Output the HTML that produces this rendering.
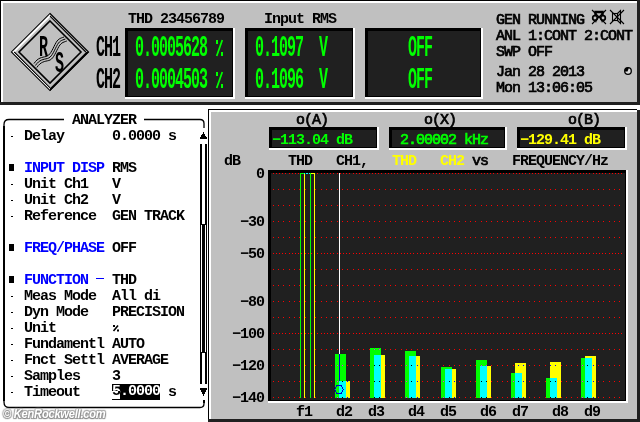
<!DOCTYPE html>
<html><head><meta charset="utf-8"><title>UPL</title>
<style>
html,body{margin:0;padding:0;}
body{width:640px;height:422px;background:#fff;overflow:hidden;position:relative;font-family:"Liberation Mono",monospace;}
#g{position:absolute;left:0;top:0;}
#tx{position:absolute;left:0;top:0;width:640px;height:422px;will-change:transform;}
.t{position:absolute;font:bold 15px/16px "Liberation Mono",monospace;letter-spacing:-1px;white-space:pre;color:#000;height:16px;}
.n{font-weight:normal;-webkit-text-stroke:0.7px currentColor;}
.b{color:#00f;}
.g{color:#0f0;}
.y{color:#ff0;}
.tall{position:absolute;font:bold 15px/16px "Liberation Mono",monospace;letter-spacing:-1px;white-space:pre;height:16px;transform-origin:0 12px;transform:scaleY(2);}
.wm{position:absolute;left:3px;top:407px;font:italic bold 13.5px/14px "Liberation Sans",sans-serif;color:#fff;letter-spacing:-0.3px;transform-origin:0 0;transform:scaleX(0.825);white-space:pre;text-shadow:1px 1px 1px #888,-1px -1px 1px #aaa,1px -1px 1px #aaa,-1px 1px 1px #888,0 0 2px #777;}
</style></head><body>

<svg id="g" width="640" height="422" viewBox="0 0 640 422" shape-rendering="crispEdges">
<rect x="0" y="0" width="640" height="105" fill="#202020"/>
<rect x="0" y="0" width="637" height="1" fill="#000"/>
<rect x="0" y="0" width="1" height="102" fill="#000"/>
<rect x="1" y="1" width="636" height="101" fill="#fff"/>
<rect x="3" y="3" width="634" height="99" fill="#c0c0c0"/>
<rect x="125" y="28" width="110" height="71" fill="#fff"/>
<rect x="125" y="28" width="108" height="69" fill="#000"/>
<rect x="128" y="31" width="104" height="65" fill="#202020"/>
<rect x="245" y="28" width="110" height="71" fill="#fff"/>
<rect x="245" y="28" width="108" height="69" fill="#000"/>
<rect x="248" y="31" width="104" height="65" fill="#202020"/>
<rect x="365" y="28" width="118" height="71" fill="#fff"/>
<rect x="365" y="28" width="116" height="69" fill="#000"/>
<rect x="368" y="31" width="112" height="65" fill="#202020"/>
<rect x="208" y="109" width="432" height="313" fill="#202020"/>
<rect x="208" y="109" width="429" height="310" fill="#000"/>
<rect x="209" y="110" width="428" height="309" fill="#fff"/>
<rect x="211" y="112" width="426" height="307" fill="#c0c0c0"/>
<rect x="637" y="105" width="3" height="5" fill="#fff"/>
<rect x="269" y="127" width="110" height="23" fill="#fff"/>
<rect x="269" y="127" width="108" height="21" fill="#000"/>
<rect x="272" y="130" width="104" height="17" fill="#202020"/>
<rect x="389" y="127" width="118" height="23" fill="#fff"/>
<rect x="389" y="127" width="116" height="21" fill="#000"/>
<rect x="392" y="130" width="112" height="17" fill="#202020"/>
<rect x="517" y="127" width="110" height="23" fill="#fff"/>
<rect x="517" y="127" width="108" height="21" fill="#000"/>
<rect x="520" y="130" width="104" height="17" fill="#202020"/>
<rect x="268" y="170" width="360" height="233" fill="#fff"/>
<rect x="268" y="170" width="358" height="231" fill="#000"/>
<rect x="271" y="173" width="354" height="227" fill="#202020"/>
<rect x="273" y="173" width="1" height="1" fill="#f00"/>
<rect x="276" y="173" width="1" height="1" fill="#f00"/>
<rect x="279" y="173" width="1" height="1" fill="#f00"/>
<rect x="282" y="173" width="1" height="1" fill="#f00"/>
<rect x="285" y="173" width="1" height="1" fill="#f00"/>
<rect x="289" y="173" width="1" height="1" fill="#f00"/>
<rect x="292" y="173" width="1" height="1" fill="#f00"/>
<rect x="295" y="173" width="1" height="1" fill="#f00"/>
<rect x="298" y="173" width="1" height="1" fill="#f00"/>
<rect x="317" y="173" width="1" height="1" fill="#f00"/>
<rect x="321" y="173" width="1" height="1" fill="#f00"/>
<rect x="324" y="173" width="1" height="1" fill="#f00"/>
<rect x="327" y="173" width="1" height="1" fill="#f00"/>
<rect x="330" y="173" width="1" height="1" fill="#f00"/>
<rect x="333" y="173" width="1" height="1" fill="#f00"/>
<rect x="337" y="173" width="1" height="1" fill="#f00"/>
<rect x="340" y="173" width="1" height="1" fill="#f00"/>
<rect x="343" y="173" width="1" height="1" fill="#f00"/>
<rect x="346" y="173" width="1" height="1" fill="#f00"/>
<rect x="349" y="173" width="1" height="1" fill="#f00"/>
<rect x="353" y="173" width="1" height="1" fill="#f00"/>
<rect x="356" y="173" width="1" height="1" fill="#f00"/>
<rect x="359" y="173" width="1" height="1" fill="#f00"/>
<rect x="362" y="173" width="1" height="1" fill="#f00"/>
<rect x="365" y="173" width="1" height="1" fill="#f00"/>
<rect x="369" y="173" width="1" height="1" fill="#f00"/>
<rect x="372" y="173" width="1" height="1" fill="#f00"/>
<rect x="375" y="173" width="1" height="1" fill="#f00"/>
<rect x="378" y="173" width="1" height="1" fill="#f00"/>
<rect x="381" y="173" width="1" height="1" fill="#f00"/>
<rect x="385" y="173" width="1" height="1" fill="#f00"/>
<rect x="388" y="173" width="1" height="1" fill="#f00"/>
<rect x="391" y="173" width="1" height="1" fill="#f00"/>
<rect x="394" y="173" width="1" height="1" fill="#f00"/>
<rect x="397" y="173" width="1" height="1" fill="#f00"/>
<rect x="401" y="173" width="1" height="1" fill="#f00"/>
<rect x="404" y="173" width="1" height="1" fill="#f00"/>
<rect x="407" y="173" width="1" height="1" fill="#f00"/>
<rect x="410" y="173" width="1" height="1" fill="#f00"/>
<rect x="413" y="173" width="1" height="1" fill="#f00"/>
<rect x="417" y="173" width="1" height="1" fill="#f00"/>
<rect x="420" y="173" width="1" height="1" fill="#f00"/>
<rect x="423" y="173" width="1" height="1" fill="#f00"/>
<rect x="426" y="173" width="1" height="1" fill="#f00"/>
<rect x="429" y="173" width="1" height="1" fill="#f00"/>
<rect x="433" y="173" width="1" height="1" fill="#f00"/>
<rect x="436" y="173" width="1" height="1" fill="#f00"/>
<rect x="439" y="173" width="1" height="1" fill="#f00"/>
<rect x="442" y="173" width="1" height="1" fill="#f00"/>
<rect x="445" y="173" width="1" height="1" fill="#f00"/>
<rect x="449" y="173" width="1" height="1" fill="#f00"/>
<rect x="452" y="173" width="1" height="1" fill="#f00"/>
<rect x="455" y="173" width="1" height="1" fill="#f00"/>
<rect x="458" y="173" width="1" height="1" fill="#f00"/>
<rect x="461" y="173" width="1" height="1" fill="#f00"/>
<rect x="465" y="173" width="1" height="1" fill="#f00"/>
<rect x="468" y="173" width="1" height="1" fill="#f00"/>
<rect x="471" y="173" width="1" height="1" fill="#f00"/>
<rect x="474" y="173" width="1" height="1" fill="#f00"/>
<rect x="477" y="173" width="1" height="1" fill="#f00"/>
<rect x="481" y="173" width="1" height="1" fill="#f00"/>
<rect x="484" y="173" width="1" height="1" fill="#f00"/>
<rect x="487" y="173" width="1" height="1" fill="#f00"/>
<rect x="490" y="173" width="1" height="1" fill="#f00"/>
<rect x="493" y="173" width="1" height="1" fill="#f00"/>
<rect x="497" y="173" width="1" height="1" fill="#f00"/>
<rect x="500" y="173" width="1" height="1" fill="#f00"/>
<rect x="503" y="173" width="1" height="1" fill="#f00"/>
<rect x="506" y="173" width="1" height="1" fill="#f00"/>
<rect x="509" y="173" width="1" height="1" fill="#f00"/>
<rect x="513" y="173" width="1" height="1" fill="#f00"/>
<rect x="516" y="173" width="1" height="1" fill="#f00"/>
<rect x="519" y="173" width="1" height="1" fill="#f00"/>
<rect x="522" y="173" width="1" height="1" fill="#f00"/>
<rect x="525" y="173" width="1" height="1" fill="#f00"/>
<rect x="529" y="173" width="1" height="1" fill="#f00"/>
<rect x="532" y="173" width="1" height="1" fill="#f00"/>
<rect x="535" y="173" width="1" height="1" fill="#f00"/>
<rect x="538" y="173" width="1" height="1" fill="#f00"/>
<rect x="541" y="173" width="1" height="1" fill="#f00"/>
<rect x="545" y="173" width="1" height="1" fill="#f00"/>
<rect x="548" y="173" width="1" height="1" fill="#f00"/>
<rect x="551" y="173" width="1" height="1" fill="#f00"/>
<rect x="554" y="173" width="1" height="1" fill="#f00"/>
<rect x="557" y="173" width="1" height="1" fill="#f00"/>
<rect x="561" y="173" width="1" height="1" fill="#f00"/>
<rect x="564" y="173" width="1" height="1" fill="#f00"/>
<rect x="567" y="173" width="1" height="1" fill="#f00"/>
<rect x="570" y="173" width="1" height="1" fill="#f00"/>
<rect x="573" y="173" width="1" height="1" fill="#f00"/>
<rect x="577" y="173" width="1" height="1" fill="#f00"/>
<rect x="580" y="173" width="1" height="1" fill="#f00"/>
<rect x="583" y="173" width="1" height="1" fill="#f00"/>
<rect x="586" y="173" width="1" height="1" fill="#f00"/>
<rect x="589" y="173" width="1" height="1" fill="#f00"/>
<rect x="593" y="173" width="1" height="1" fill="#f00"/>
<rect x="596" y="173" width="1" height="1" fill="#f00"/>
<rect x="599" y="173" width="1" height="1" fill="#f00"/>
<rect x="602" y="173" width="1" height="1" fill="#f00"/>
<rect x="605" y="173" width="1" height="1" fill="#f00"/>
<rect x="609" y="173" width="1" height="1" fill="#f00"/>
<rect x="612" y="173" width="1" height="1" fill="#f00"/>
<rect x="615" y="173" width="1" height="1" fill="#f00"/>
<rect x="618" y="173" width="1" height="1" fill="#f00"/>
<rect x="621" y="173" width="1" height="1" fill="#f00"/>
<rect x="273" y="189" width="1" height="1" fill="#f00"/>
<rect x="278" y="189" width="1" height="1" fill="#f00"/>
<rect x="283" y="189" width="1" height="1" fill="#f00"/>
<rect x="289" y="189" width="1" height="1" fill="#f00"/>
<rect x="294" y="189" width="1" height="1" fill="#f00"/>
<rect x="299" y="189" width="1" height="1" fill="#f00"/>
<rect x="305" y="189" width="1" height="1" fill="#f00"/>
<rect x="310" y="189" width="1" height="1" fill="#f00"/>
<rect x="315" y="189" width="1" height="1" fill="#f00"/>
<rect x="321" y="189" width="1" height="1" fill="#f00"/>
<rect x="326" y="189" width="1" height="1" fill="#f00"/>
<rect x="331" y="189" width="1" height="1" fill="#f00"/>
<rect x="337" y="189" width="1" height="1" fill="#f00"/>
<rect x="342" y="189" width="1" height="1" fill="#f00"/>
<rect x="347" y="189" width="1" height="1" fill="#f00"/>
<rect x="353" y="189" width="1" height="1" fill="#f00"/>
<rect x="358" y="189" width="1" height="1" fill="#f00"/>
<rect x="363" y="189" width="1" height="1" fill="#f00"/>
<rect x="369" y="189" width="1" height="1" fill="#f00"/>
<rect x="374" y="189" width="1" height="1" fill="#f00"/>
<rect x="379" y="189" width="1" height="1" fill="#f00"/>
<rect x="385" y="189" width="1" height="1" fill="#f00"/>
<rect x="390" y="189" width="1" height="1" fill="#f00"/>
<rect x="395" y="189" width="1" height="1" fill="#f00"/>
<rect x="401" y="189" width="1" height="1" fill="#f00"/>
<rect x="406" y="189" width="1" height="1" fill="#f00"/>
<rect x="411" y="189" width="1" height="1" fill="#f00"/>
<rect x="417" y="189" width="1" height="1" fill="#f00"/>
<rect x="422" y="189" width="1" height="1" fill="#f00"/>
<rect x="427" y="189" width="1" height="1" fill="#f00"/>
<rect x="433" y="189" width="1" height="1" fill="#f00"/>
<rect x="438" y="189" width="1" height="1" fill="#f00"/>
<rect x="443" y="189" width="1" height="1" fill="#f00"/>
<rect x="449" y="189" width="1" height="1" fill="#f00"/>
<rect x="454" y="189" width="1" height="1" fill="#f00"/>
<rect x="459" y="189" width="1" height="1" fill="#f00"/>
<rect x="465" y="189" width="1" height="1" fill="#f00"/>
<rect x="470" y="189" width="1" height="1" fill="#f00"/>
<rect x="475" y="189" width="1" height="1" fill="#f00"/>
<rect x="481" y="189" width="1" height="1" fill="#f00"/>
<rect x="486" y="189" width="1" height="1" fill="#f00"/>
<rect x="491" y="189" width="1" height="1" fill="#f00"/>
<rect x="497" y="189" width="1" height="1" fill="#f00"/>
<rect x="502" y="189" width="1" height="1" fill="#f00"/>
<rect x="507" y="189" width="1" height="1" fill="#f00"/>
<rect x="513" y="189" width="1" height="1" fill="#f00"/>
<rect x="518" y="189" width="1" height="1" fill="#f00"/>
<rect x="523" y="189" width="1" height="1" fill="#f00"/>
<rect x="529" y="189" width="1" height="1" fill="#f00"/>
<rect x="534" y="189" width="1" height="1" fill="#f00"/>
<rect x="539" y="189" width="1" height="1" fill="#f00"/>
<rect x="545" y="189" width="1" height="1" fill="#f00"/>
<rect x="550" y="189" width="1" height="1" fill="#f00"/>
<rect x="555" y="189" width="1" height="1" fill="#f00"/>
<rect x="561" y="189" width="1" height="1" fill="#f00"/>
<rect x="566" y="189" width="1" height="1" fill="#f00"/>
<rect x="571" y="189" width="1" height="1" fill="#f00"/>
<rect x="577" y="189" width="1" height="1" fill="#f00"/>
<rect x="582" y="189" width="1" height="1" fill="#f00"/>
<rect x="587" y="189" width="1" height="1" fill="#f00"/>
<rect x="593" y="189" width="1" height="1" fill="#f00"/>
<rect x="598" y="189" width="1" height="1" fill="#f00"/>
<rect x="603" y="189" width="1" height="1" fill="#f00"/>
<rect x="609" y="189" width="1" height="1" fill="#f00"/>
<rect x="614" y="189" width="1" height="1" fill="#f00"/>
<rect x="619" y="189" width="1" height="1" fill="#f00"/>
<rect x="273" y="205" width="1" height="1" fill="#f00"/>
<rect x="278" y="205" width="1" height="1" fill="#f00"/>
<rect x="283" y="205" width="1" height="1" fill="#f00"/>
<rect x="289" y="205" width="1" height="1" fill="#f00"/>
<rect x="294" y="205" width="1" height="1" fill="#f00"/>
<rect x="299" y="205" width="1" height="1" fill="#f00"/>
<rect x="305" y="205" width="1" height="1" fill="#f00"/>
<rect x="310" y="205" width="1" height="1" fill="#f00"/>
<rect x="315" y="205" width="1" height="1" fill="#f00"/>
<rect x="321" y="205" width="1" height="1" fill="#f00"/>
<rect x="326" y="205" width="1" height="1" fill="#f00"/>
<rect x="331" y="205" width="1" height="1" fill="#f00"/>
<rect x="337" y="205" width="1" height="1" fill="#f00"/>
<rect x="342" y="205" width="1" height="1" fill="#f00"/>
<rect x="347" y="205" width="1" height="1" fill="#f00"/>
<rect x="353" y="205" width="1" height="1" fill="#f00"/>
<rect x="358" y="205" width="1" height="1" fill="#f00"/>
<rect x="363" y="205" width="1" height="1" fill="#f00"/>
<rect x="369" y="205" width="1" height="1" fill="#f00"/>
<rect x="374" y="205" width="1" height="1" fill="#f00"/>
<rect x="379" y="205" width="1" height="1" fill="#f00"/>
<rect x="385" y="205" width="1" height="1" fill="#f00"/>
<rect x="390" y="205" width="1" height="1" fill="#f00"/>
<rect x="395" y="205" width="1" height="1" fill="#f00"/>
<rect x="401" y="205" width="1" height="1" fill="#f00"/>
<rect x="406" y="205" width="1" height="1" fill="#f00"/>
<rect x="411" y="205" width="1" height="1" fill="#f00"/>
<rect x="417" y="205" width="1" height="1" fill="#f00"/>
<rect x="422" y="205" width="1" height="1" fill="#f00"/>
<rect x="427" y="205" width="1" height="1" fill="#f00"/>
<rect x="433" y="205" width="1" height="1" fill="#f00"/>
<rect x="438" y="205" width="1" height="1" fill="#f00"/>
<rect x="443" y="205" width="1" height="1" fill="#f00"/>
<rect x="449" y="205" width="1" height="1" fill="#f00"/>
<rect x="454" y="205" width="1" height="1" fill="#f00"/>
<rect x="459" y="205" width="1" height="1" fill="#f00"/>
<rect x="465" y="205" width="1" height="1" fill="#f00"/>
<rect x="470" y="205" width="1" height="1" fill="#f00"/>
<rect x="475" y="205" width="1" height="1" fill="#f00"/>
<rect x="481" y="205" width="1" height="1" fill="#f00"/>
<rect x="486" y="205" width="1" height="1" fill="#f00"/>
<rect x="491" y="205" width="1" height="1" fill="#f00"/>
<rect x="497" y="205" width="1" height="1" fill="#f00"/>
<rect x="502" y="205" width="1" height="1" fill="#f00"/>
<rect x="507" y="205" width="1" height="1" fill="#f00"/>
<rect x="513" y="205" width="1" height="1" fill="#f00"/>
<rect x="518" y="205" width="1" height="1" fill="#f00"/>
<rect x="523" y="205" width="1" height="1" fill="#f00"/>
<rect x="529" y="205" width="1" height="1" fill="#f00"/>
<rect x="534" y="205" width="1" height="1" fill="#f00"/>
<rect x="539" y="205" width="1" height="1" fill="#f00"/>
<rect x="545" y="205" width="1" height="1" fill="#f00"/>
<rect x="550" y="205" width="1" height="1" fill="#f00"/>
<rect x="555" y="205" width="1" height="1" fill="#f00"/>
<rect x="561" y="205" width="1" height="1" fill="#f00"/>
<rect x="566" y="205" width="1" height="1" fill="#f00"/>
<rect x="571" y="205" width="1" height="1" fill="#f00"/>
<rect x="577" y="205" width="1" height="1" fill="#f00"/>
<rect x="582" y="205" width="1" height="1" fill="#f00"/>
<rect x="587" y="205" width="1" height="1" fill="#f00"/>
<rect x="593" y="205" width="1" height="1" fill="#f00"/>
<rect x="598" y="205" width="1" height="1" fill="#f00"/>
<rect x="603" y="205" width="1" height="1" fill="#f00"/>
<rect x="609" y="205" width="1" height="1" fill="#f00"/>
<rect x="614" y="205" width="1" height="1" fill="#f00"/>
<rect x="619" y="205" width="1" height="1" fill="#f00"/>
<rect x="273" y="221" width="1" height="1" fill="#f00"/>
<rect x="278" y="221" width="1" height="1" fill="#f00"/>
<rect x="283" y="221" width="1" height="1" fill="#f00"/>
<rect x="289" y="221" width="1" height="1" fill="#f00"/>
<rect x="294" y="221" width="1" height="1" fill="#f00"/>
<rect x="299" y="221" width="1" height="1" fill="#f00"/>
<rect x="305" y="221" width="1" height="1" fill="#f00"/>
<rect x="310" y="221" width="1" height="1" fill="#f00"/>
<rect x="315" y="221" width="1" height="1" fill="#f00"/>
<rect x="321" y="221" width="1" height="1" fill="#f00"/>
<rect x="326" y="221" width="1" height="1" fill="#f00"/>
<rect x="331" y="221" width="1" height="1" fill="#f00"/>
<rect x="337" y="221" width="1" height="1" fill="#f00"/>
<rect x="342" y="221" width="1" height="1" fill="#f00"/>
<rect x="347" y="221" width="1" height="1" fill="#f00"/>
<rect x="353" y="221" width="1" height="1" fill="#f00"/>
<rect x="358" y="221" width="1" height="1" fill="#f00"/>
<rect x="363" y="221" width="1" height="1" fill="#f00"/>
<rect x="369" y="221" width="1" height="1" fill="#f00"/>
<rect x="374" y="221" width="1" height="1" fill="#f00"/>
<rect x="379" y="221" width="1" height="1" fill="#f00"/>
<rect x="385" y="221" width="1" height="1" fill="#f00"/>
<rect x="390" y="221" width="1" height="1" fill="#f00"/>
<rect x="395" y="221" width="1" height="1" fill="#f00"/>
<rect x="401" y="221" width="1" height="1" fill="#f00"/>
<rect x="406" y="221" width="1" height="1" fill="#f00"/>
<rect x="411" y="221" width="1" height="1" fill="#f00"/>
<rect x="417" y="221" width="1" height="1" fill="#f00"/>
<rect x="422" y="221" width="1" height="1" fill="#f00"/>
<rect x="427" y="221" width="1" height="1" fill="#f00"/>
<rect x="433" y="221" width="1" height="1" fill="#f00"/>
<rect x="438" y="221" width="1" height="1" fill="#f00"/>
<rect x="443" y="221" width="1" height="1" fill="#f00"/>
<rect x="449" y="221" width="1" height="1" fill="#f00"/>
<rect x="454" y="221" width="1" height="1" fill="#f00"/>
<rect x="459" y="221" width="1" height="1" fill="#f00"/>
<rect x="465" y="221" width="1" height="1" fill="#f00"/>
<rect x="470" y="221" width="1" height="1" fill="#f00"/>
<rect x="475" y="221" width="1" height="1" fill="#f00"/>
<rect x="481" y="221" width="1" height="1" fill="#f00"/>
<rect x="486" y="221" width="1" height="1" fill="#f00"/>
<rect x="491" y="221" width="1" height="1" fill="#f00"/>
<rect x="497" y="221" width="1" height="1" fill="#f00"/>
<rect x="502" y="221" width="1" height="1" fill="#f00"/>
<rect x="507" y="221" width="1" height="1" fill="#f00"/>
<rect x="513" y="221" width="1" height="1" fill="#f00"/>
<rect x="518" y="221" width="1" height="1" fill="#f00"/>
<rect x="523" y="221" width="1" height="1" fill="#f00"/>
<rect x="529" y="221" width="1" height="1" fill="#f00"/>
<rect x="534" y="221" width="1" height="1" fill="#f00"/>
<rect x="539" y="221" width="1" height="1" fill="#f00"/>
<rect x="545" y="221" width="1" height="1" fill="#f00"/>
<rect x="550" y="221" width="1" height="1" fill="#f00"/>
<rect x="555" y="221" width="1" height="1" fill="#f00"/>
<rect x="561" y="221" width="1" height="1" fill="#f00"/>
<rect x="566" y="221" width="1" height="1" fill="#f00"/>
<rect x="571" y="221" width="1" height="1" fill="#f00"/>
<rect x="577" y="221" width="1" height="1" fill="#f00"/>
<rect x="582" y="221" width="1" height="1" fill="#f00"/>
<rect x="587" y="221" width="1" height="1" fill="#f00"/>
<rect x="593" y="221" width="1" height="1" fill="#f00"/>
<rect x="598" y="221" width="1" height="1" fill="#f00"/>
<rect x="603" y="221" width="1" height="1" fill="#f00"/>
<rect x="609" y="221" width="1" height="1" fill="#f00"/>
<rect x="614" y="221" width="1" height="1" fill="#f00"/>
<rect x="619" y="221" width="1" height="1" fill="#f00"/>
<rect x="273" y="237" width="1" height="1" fill="#f00"/>
<rect x="278" y="237" width="1" height="1" fill="#f00"/>
<rect x="283" y="237" width="1" height="1" fill="#f00"/>
<rect x="289" y="237" width="1" height="1" fill="#f00"/>
<rect x="294" y="237" width="1" height="1" fill="#f00"/>
<rect x="299" y="237" width="1" height="1" fill="#f00"/>
<rect x="305" y="237" width="1" height="1" fill="#f00"/>
<rect x="310" y="237" width="1" height="1" fill="#f00"/>
<rect x="315" y="237" width="1" height="1" fill="#f00"/>
<rect x="321" y="237" width="1" height="1" fill="#f00"/>
<rect x="326" y="237" width="1" height="1" fill="#f00"/>
<rect x="331" y="237" width="1" height="1" fill="#f00"/>
<rect x="337" y="237" width="1" height="1" fill="#f00"/>
<rect x="342" y="237" width="1" height="1" fill="#f00"/>
<rect x="347" y="237" width="1" height="1" fill="#f00"/>
<rect x="353" y="237" width="1" height="1" fill="#f00"/>
<rect x="358" y="237" width="1" height="1" fill="#f00"/>
<rect x="363" y="237" width="1" height="1" fill="#f00"/>
<rect x="369" y="237" width="1" height="1" fill="#f00"/>
<rect x="374" y="237" width="1" height="1" fill="#f00"/>
<rect x="379" y="237" width="1" height="1" fill="#f00"/>
<rect x="385" y="237" width="1" height="1" fill="#f00"/>
<rect x="390" y="237" width="1" height="1" fill="#f00"/>
<rect x="395" y="237" width="1" height="1" fill="#f00"/>
<rect x="401" y="237" width="1" height="1" fill="#f00"/>
<rect x="406" y="237" width="1" height="1" fill="#f00"/>
<rect x="411" y="237" width="1" height="1" fill="#f00"/>
<rect x="417" y="237" width="1" height="1" fill="#f00"/>
<rect x="422" y="237" width="1" height="1" fill="#f00"/>
<rect x="427" y="237" width="1" height="1" fill="#f00"/>
<rect x="433" y="237" width="1" height="1" fill="#f00"/>
<rect x="438" y="237" width="1" height="1" fill="#f00"/>
<rect x="443" y="237" width="1" height="1" fill="#f00"/>
<rect x="449" y="237" width="1" height="1" fill="#f00"/>
<rect x="454" y="237" width="1" height="1" fill="#f00"/>
<rect x="459" y="237" width="1" height="1" fill="#f00"/>
<rect x="465" y="237" width="1" height="1" fill="#f00"/>
<rect x="470" y="237" width="1" height="1" fill="#f00"/>
<rect x="475" y="237" width="1" height="1" fill="#f00"/>
<rect x="481" y="237" width="1" height="1" fill="#f00"/>
<rect x="486" y="237" width="1" height="1" fill="#f00"/>
<rect x="491" y="237" width="1" height="1" fill="#f00"/>
<rect x="497" y="237" width="1" height="1" fill="#f00"/>
<rect x="502" y="237" width="1" height="1" fill="#f00"/>
<rect x="507" y="237" width="1" height="1" fill="#f00"/>
<rect x="513" y="237" width="1" height="1" fill="#f00"/>
<rect x="518" y="237" width="1" height="1" fill="#f00"/>
<rect x="523" y="237" width="1" height="1" fill="#f00"/>
<rect x="529" y="237" width="1" height="1" fill="#f00"/>
<rect x="534" y="237" width="1" height="1" fill="#f00"/>
<rect x="539" y="237" width="1" height="1" fill="#f00"/>
<rect x="545" y="237" width="1" height="1" fill="#f00"/>
<rect x="550" y="237" width="1" height="1" fill="#f00"/>
<rect x="555" y="237" width="1" height="1" fill="#f00"/>
<rect x="561" y="237" width="1" height="1" fill="#f00"/>
<rect x="566" y="237" width="1" height="1" fill="#f00"/>
<rect x="571" y="237" width="1" height="1" fill="#f00"/>
<rect x="577" y="237" width="1" height="1" fill="#f00"/>
<rect x="582" y="237" width="1" height="1" fill="#f00"/>
<rect x="587" y="237" width="1" height="1" fill="#f00"/>
<rect x="593" y="237" width="1" height="1" fill="#f00"/>
<rect x="598" y="237" width="1" height="1" fill="#f00"/>
<rect x="603" y="237" width="1" height="1" fill="#f00"/>
<rect x="609" y="237" width="1" height="1" fill="#f00"/>
<rect x="614" y="237" width="1" height="1" fill="#f00"/>
<rect x="619" y="237" width="1" height="1" fill="#f00"/>
<rect x="273" y="253" width="1" height="1" fill="#f00"/>
<rect x="276" y="253" width="1" height="1" fill="#f00"/>
<rect x="279" y="253" width="1" height="1" fill="#f00"/>
<rect x="282" y="253" width="1" height="1" fill="#f00"/>
<rect x="285" y="253" width="1" height="1" fill="#f00"/>
<rect x="289" y="253" width="1" height="1" fill="#f00"/>
<rect x="292" y="253" width="1" height="1" fill="#f00"/>
<rect x="295" y="253" width="1" height="1" fill="#f00"/>
<rect x="298" y="253" width="1" height="1" fill="#f00"/>
<rect x="301" y="253" width="1" height="1" fill="#f00"/>
<rect x="305" y="253" width="1" height="1" fill="#f00"/>
<rect x="308" y="253" width="1" height="1" fill="#f00"/>
<rect x="311" y="253" width="1" height="1" fill="#f00"/>
<rect x="314" y="253" width="1" height="1" fill="#f00"/>
<rect x="317" y="253" width="1" height="1" fill="#f00"/>
<rect x="321" y="253" width="1" height="1" fill="#f00"/>
<rect x="324" y="253" width="1" height="1" fill="#f00"/>
<rect x="327" y="253" width="1" height="1" fill="#f00"/>
<rect x="330" y="253" width="1" height="1" fill="#f00"/>
<rect x="333" y="253" width="1" height="1" fill="#f00"/>
<rect x="337" y="253" width="1" height="1" fill="#f00"/>
<rect x="340" y="253" width="1" height="1" fill="#f00"/>
<rect x="343" y="253" width="1" height="1" fill="#f00"/>
<rect x="346" y="253" width="1" height="1" fill="#f00"/>
<rect x="349" y="253" width="1" height="1" fill="#f00"/>
<rect x="353" y="253" width="1" height="1" fill="#f00"/>
<rect x="356" y="253" width="1" height="1" fill="#f00"/>
<rect x="359" y="253" width="1" height="1" fill="#f00"/>
<rect x="362" y="253" width="1" height="1" fill="#f00"/>
<rect x="365" y="253" width="1" height="1" fill="#f00"/>
<rect x="369" y="253" width="1" height="1" fill="#f00"/>
<rect x="372" y="253" width="1" height="1" fill="#f00"/>
<rect x="375" y="253" width="1" height="1" fill="#f00"/>
<rect x="378" y="253" width="1" height="1" fill="#f00"/>
<rect x="381" y="253" width="1" height="1" fill="#f00"/>
<rect x="385" y="253" width="1" height="1" fill="#f00"/>
<rect x="388" y="253" width="1" height="1" fill="#f00"/>
<rect x="391" y="253" width="1" height="1" fill="#f00"/>
<rect x="394" y="253" width="1" height="1" fill="#f00"/>
<rect x="397" y="253" width="1" height="1" fill="#f00"/>
<rect x="401" y="253" width="1" height="1" fill="#f00"/>
<rect x="404" y="253" width="1" height="1" fill="#f00"/>
<rect x="407" y="253" width="1" height="1" fill="#f00"/>
<rect x="410" y="253" width="1" height="1" fill="#f00"/>
<rect x="413" y="253" width="1" height="1" fill="#f00"/>
<rect x="417" y="253" width="1" height="1" fill="#f00"/>
<rect x="420" y="253" width="1" height="1" fill="#f00"/>
<rect x="423" y="253" width="1" height="1" fill="#f00"/>
<rect x="426" y="253" width="1" height="1" fill="#f00"/>
<rect x="429" y="253" width="1" height="1" fill="#f00"/>
<rect x="433" y="253" width="1" height="1" fill="#f00"/>
<rect x="436" y="253" width="1" height="1" fill="#f00"/>
<rect x="439" y="253" width="1" height="1" fill="#f00"/>
<rect x="442" y="253" width="1" height="1" fill="#f00"/>
<rect x="445" y="253" width="1" height="1" fill="#f00"/>
<rect x="449" y="253" width="1" height="1" fill="#f00"/>
<rect x="452" y="253" width="1" height="1" fill="#f00"/>
<rect x="455" y="253" width="1" height="1" fill="#f00"/>
<rect x="458" y="253" width="1" height="1" fill="#f00"/>
<rect x="461" y="253" width="1" height="1" fill="#f00"/>
<rect x="465" y="253" width="1" height="1" fill="#f00"/>
<rect x="468" y="253" width="1" height="1" fill="#f00"/>
<rect x="471" y="253" width="1" height="1" fill="#f00"/>
<rect x="474" y="253" width="1" height="1" fill="#f00"/>
<rect x="477" y="253" width="1" height="1" fill="#f00"/>
<rect x="481" y="253" width="1" height="1" fill="#f00"/>
<rect x="484" y="253" width="1" height="1" fill="#f00"/>
<rect x="487" y="253" width="1" height="1" fill="#f00"/>
<rect x="490" y="253" width="1" height="1" fill="#f00"/>
<rect x="493" y="253" width="1" height="1" fill="#f00"/>
<rect x="497" y="253" width="1" height="1" fill="#f00"/>
<rect x="500" y="253" width="1" height="1" fill="#f00"/>
<rect x="503" y="253" width="1" height="1" fill="#f00"/>
<rect x="506" y="253" width="1" height="1" fill="#f00"/>
<rect x="509" y="253" width="1" height="1" fill="#f00"/>
<rect x="513" y="253" width="1" height="1" fill="#f00"/>
<rect x="516" y="253" width="1" height="1" fill="#f00"/>
<rect x="519" y="253" width="1" height="1" fill="#f00"/>
<rect x="522" y="253" width="1" height="1" fill="#f00"/>
<rect x="525" y="253" width="1" height="1" fill="#f00"/>
<rect x="529" y="253" width="1" height="1" fill="#f00"/>
<rect x="532" y="253" width="1" height="1" fill="#f00"/>
<rect x="535" y="253" width="1" height="1" fill="#f00"/>
<rect x="538" y="253" width="1" height="1" fill="#f00"/>
<rect x="541" y="253" width="1" height="1" fill="#f00"/>
<rect x="545" y="253" width="1" height="1" fill="#f00"/>
<rect x="548" y="253" width="1" height="1" fill="#f00"/>
<rect x="551" y="253" width="1" height="1" fill="#f00"/>
<rect x="554" y="253" width="1" height="1" fill="#f00"/>
<rect x="557" y="253" width="1" height="1" fill="#f00"/>
<rect x="561" y="253" width="1" height="1" fill="#f00"/>
<rect x="564" y="253" width="1" height="1" fill="#f00"/>
<rect x="567" y="253" width="1" height="1" fill="#f00"/>
<rect x="570" y="253" width="1" height="1" fill="#f00"/>
<rect x="573" y="253" width="1" height="1" fill="#f00"/>
<rect x="577" y="253" width="1" height="1" fill="#f00"/>
<rect x="580" y="253" width="1" height="1" fill="#f00"/>
<rect x="583" y="253" width="1" height="1" fill="#f00"/>
<rect x="586" y="253" width="1" height="1" fill="#f00"/>
<rect x="589" y="253" width="1" height="1" fill="#f00"/>
<rect x="593" y="253" width="1" height="1" fill="#f00"/>
<rect x="596" y="253" width="1" height="1" fill="#f00"/>
<rect x="599" y="253" width="1" height="1" fill="#f00"/>
<rect x="602" y="253" width="1" height="1" fill="#f00"/>
<rect x="605" y="253" width="1" height="1" fill="#f00"/>
<rect x="609" y="253" width="1" height="1" fill="#f00"/>
<rect x="612" y="253" width="1" height="1" fill="#f00"/>
<rect x="615" y="253" width="1" height="1" fill="#f00"/>
<rect x="618" y="253" width="1" height="1" fill="#f00"/>
<rect x="621" y="253" width="1" height="1" fill="#f00"/>
<rect x="273" y="269" width="1" height="1" fill="#f00"/>
<rect x="278" y="269" width="1" height="1" fill="#f00"/>
<rect x="283" y="269" width="1" height="1" fill="#f00"/>
<rect x="289" y="269" width="1" height="1" fill="#f00"/>
<rect x="294" y="269" width="1" height="1" fill="#f00"/>
<rect x="299" y="269" width="1" height="1" fill="#f00"/>
<rect x="305" y="269" width="1" height="1" fill="#f00"/>
<rect x="310" y="269" width="1" height="1" fill="#f00"/>
<rect x="315" y="269" width="1" height="1" fill="#f00"/>
<rect x="321" y="269" width="1" height="1" fill="#f00"/>
<rect x="326" y="269" width="1" height="1" fill="#f00"/>
<rect x="331" y="269" width="1" height="1" fill="#f00"/>
<rect x="337" y="269" width="1" height="1" fill="#f00"/>
<rect x="342" y="269" width="1" height="1" fill="#f00"/>
<rect x="347" y="269" width="1" height="1" fill="#f00"/>
<rect x="353" y="269" width="1" height="1" fill="#f00"/>
<rect x="358" y="269" width="1" height="1" fill="#f00"/>
<rect x="363" y="269" width="1" height="1" fill="#f00"/>
<rect x="369" y="269" width="1" height="1" fill="#f00"/>
<rect x="374" y="269" width="1" height="1" fill="#f00"/>
<rect x="379" y="269" width="1" height="1" fill="#f00"/>
<rect x="385" y="269" width="1" height="1" fill="#f00"/>
<rect x="390" y="269" width="1" height="1" fill="#f00"/>
<rect x="395" y="269" width="1" height="1" fill="#f00"/>
<rect x="401" y="269" width="1" height="1" fill="#f00"/>
<rect x="406" y="269" width="1" height="1" fill="#f00"/>
<rect x="411" y="269" width="1" height="1" fill="#f00"/>
<rect x="417" y="269" width="1" height="1" fill="#f00"/>
<rect x="422" y="269" width="1" height="1" fill="#f00"/>
<rect x="427" y="269" width="1" height="1" fill="#f00"/>
<rect x="433" y="269" width="1" height="1" fill="#f00"/>
<rect x="438" y="269" width="1" height="1" fill="#f00"/>
<rect x="443" y="269" width="1" height="1" fill="#f00"/>
<rect x="449" y="269" width="1" height="1" fill="#f00"/>
<rect x="454" y="269" width="1" height="1" fill="#f00"/>
<rect x="459" y="269" width="1" height="1" fill="#f00"/>
<rect x="465" y="269" width="1" height="1" fill="#f00"/>
<rect x="470" y="269" width="1" height="1" fill="#f00"/>
<rect x="475" y="269" width="1" height="1" fill="#f00"/>
<rect x="481" y="269" width="1" height="1" fill="#f00"/>
<rect x="486" y="269" width="1" height="1" fill="#f00"/>
<rect x="491" y="269" width="1" height="1" fill="#f00"/>
<rect x="497" y="269" width="1" height="1" fill="#f00"/>
<rect x="502" y="269" width="1" height="1" fill="#f00"/>
<rect x="507" y="269" width="1" height="1" fill="#f00"/>
<rect x="513" y="269" width="1" height="1" fill="#f00"/>
<rect x="518" y="269" width="1" height="1" fill="#f00"/>
<rect x="523" y="269" width="1" height="1" fill="#f00"/>
<rect x="529" y="269" width="1" height="1" fill="#f00"/>
<rect x="534" y="269" width="1" height="1" fill="#f00"/>
<rect x="539" y="269" width="1" height="1" fill="#f00"/>
<rect x="545" y="269" width="1" height="1" fill="#f00"/>
<rect x="550" y="269" width="1" height="1" fill="#f00"/>
<rect x="555" y="269" width="1" height="1" fill="#f00"/>
<rect x="561" y="269" width="1" height="1" fill="#f00"/>
<rect x="566" y="269" width="1" height="1" fill="#f00"/>
<rect x="571" y="269" width="1" height="1" fill="#f00"/>
<rect x="577" y="269" width="1" height="1" fill="#f00"/>
<rect x="582" y="269" width="1" height="1" fill="#f00"/>
<rect x="587" y="269" width="1" height="1" fill="#f00"/>
<rect x="593" y="269" width="1" height="1" fill="#f00"/>
<rect x="598" y="269" width="1" height="1" fill="#f00"/>
<rect x="603" y="269" width="1" height="1" fill="#f00"/>
<rect x="609" y="269" width="1" height="1" fill="#f00"/>
<rect x="614" y="269" width="1" height="1" fill="#f00"/>
<rect x="619" y="269" width="1" height="1" fill="#f00"/>
<rect x="273" y="285" width="1" height="1" fill="#f00"/>
<rect x="278" y="285" width="1" height="1" fill="#f00"/>
<rect x="283" y="285" width="1" height="1" fill="#f00"/>
<rect x="289" y="285" width="1" height="1" fill="#f00"/>
<rect x="294" y="285" width="1" height="1" fill="#f00"/>
<rect x="299" y="285" width="1" height="1" fill="#f00"/>
<rect x="305" y="285" width="1" height="1" fill="#f00"/>
<rect x="310" y="285" width="1" height="1" fill="#f00"/>
<rect x="315" y="285" width="1" height="1" fill="#f00"/>
<rect x="321" y="285" width="1" height="1" fill="#f00"/>
<rect x="326" y="285" width="1" height="1" fill="#f00"/>
<rect x="331" y="285" width="1" height="1" fill="#f00"/>
<rect x="337" y="285" width="1" height="1" fill="#f00"/>
<rect x="342" y="285" width="1" height="1" fill="#f00"/>
<rect x="347" y="285" width="1" height="1" fill="#f00"/>
<rect x="353" y="285" width="1" height="1" fill="#f00"/>
<rect x="358" y="285" width="1" height="1" fill="#f00"/>
<rect x="363" y="285" width="1" height="1" fill="#f00"/>
<rect x="369" y="285" width="1" height="1" fill="#f00"/>
<rect x="374" y="285" width="1" height="1" fill="#f00"/>
<rect x="379" y="285" width="1" height="1" fill="#f00"/>
<rect x="385" y="285" width="1" height="1" fill="#f00"/>
<rect x="390" y="285" width="1" height="1" fill="#f00"/>
<rect x="395" y="285" width="1" height="1" fill="#f00"/>
<rect x="401" y="285" width="1" height="1" fill="#f00"/>
<rect x="406" y="285" width="1" height="1" fill="#f00"/>
<rect x="411" y="285" width="1" height="1" fill="#f00"/>
<rect x="417" y="285" width="1" height="1" fill="#f00"/>
<rect x="422" y="285" width="1" height="1" fill="#f00"/>
<rect x="427" y="285" width="1" height="1" fill="#f00"/>
<rect x="433" y="285" width="1" height="1" fill="#f00"/>
<rect x="438" y="285" width="1" height="1" fill="#f00"/>
<rect x="443" y="285" width="1" height="1" fill="#f00"/>
<rect x="449" y="285" width="1" height="1" fill="#f00"/>
<rect x="454" y="285" width="1" height="1" fill="#f00"/>
<rect x="459" y="285" width="1" height="1" fill="#f00"/>
<rect x="465" y="285" width="1" height="1" fill="#f00"/>
<rect x="470" y="285" width="1" height="1" fill="#f00"/>
<rect x="475" y="285" width="1" height="1" fill="#f00"/>
<rect x="481" y="285" width="1" height="1" fill="#f00"/>
<rect x="486" y="285" width="1" height="1" fill="#f00"/>
<rect x="491" y="285" width="1" height="1" fill="#f00"/>
<rect x="497" y="285" width="1" height="1" fill="#f00"/>
<rect x="502" y="285" width="1" height="1" fill="#f00"/>
<rect x="507" y="285" width="1" height="1" fill="#f00"/>
<rect x="513" y="285" width="1" height="1" fill="#f00"/>
<rect x="518" y="285" width="1" height="1" fill="#f00"/>
<rect x="523" y="285" width="1" height="1" fill="#f00"/>
<rect x="529" y="285" width="1" height="1" fill="#f00"/>
<rect x="534" y="285" width="1" height="1" fill="#f00"/>
<rect x="539" y="285" width="1" height="1" fill="#f00"/>
<rect x="545" y="285" width="1" height="1" fill="#f00"/>
<rect x="550" y="285" width="1" height="1" fill="#f00"/>
<rect x="555" y="285" width="1" height="1" fill="#f00"/>
<rect x="561" y="285" width="1" height="1" fill="#f00"/>
<rect x="566" y="285" width="1" height="1" fill="#f00"/>
<rect x="571" y="285" width="1" height="1" fill="#f00"/>
<rect x="577" y="285" width="1" height="1" fill="#f00"/>
<rect x="582" y="285" width="1" height="1" fill="#f00"/>
<rect x="587" y="285" width="1" height="1" fill="#f00"/>
<rect x="593" y="285" width="1" height="1" fill="#f00"/>
<rect x="598" y="285" width="1" height="1" fill="#f00"/>
<rect x="603" y="285" width="1" height="1" fill="#f00"/>
<rect x="609" y="285" width="1" height="1" fill="#f00"/>
<rect x="614" y="285" width="1" height="1" fill="#f00"/>
<rect x="619" y="285" width="1" height="1" fill="#f00"/>
<rect x="273" y="301" width="1" height="1" fill="#f00"/>
<rect x="278" y="301" width="1" height="1" fill="#f00"/>
<rect x="283" y="301" width="1" height="1" fill="#f00"/>
<rect x="289" y="301" width="1" height="1" fill="#f00"/>
<rect x="294" y="301" width="1" height="1" fill="#f00"/>
<rect x="299" y="301" width="1" height="1" fill="#f00"/>
<rect x="305" y="301" width="1" height="1" fill="#f00"/>
<rect x="310" y="301" width="1" height="1" fill="#f00"/>
<rect x="315" y="301" width="1" height="1" fill="#f00"/>
<rect x="321" y="301" width="1" height="1" fill="#f00"/>
<rect x="326" y="301" width="1" height="1" fill="#f00"/>
<rect x="331" y="301" width="1" height="1" fill="#f00"/>
<rect x="337" y="301" width="1" height="1" fill="#f00"/>
<rect x="342" y="301" width="1" height="1" fill="#f00"/>
<rect x="347" y="301" width="1" height="1" fill="#f00"/>
<rect x="353" y="301" width="1" height="1" fill="#f00"/>
<rect x="358" y="301" width="1" height="1" fill="#f00"/>
<rect x="363" y="301" width="1" height="1" fill="#f00"/>
<rect x="369" y="301" width="1" height="1" fill="#f00"/>
<rect x="374" y="301" width="1" height="1" fill="#f00"/>
<rect x="379" y="301" width="1" height="1" fill="#f00"/>
<rect x="385" y="301" width="1" height="1" fill="#f00"/>
<rect x="390" y="301" width="1" height="1" fill="#f00"/>
<rect x="395" y="301" width="1" height="1" fill="#f00"/>
<rect x="401" y="301" width="1" height="1" fill="#f00"/>
<rect x="406" y="301" width="1" height="1" fill="#f00"/>
<rect x="411" y="301" width="1" height="1" fill="#f00"/>
<rect x="417" y="301" width="1" height="1" fill="#f00"/>
<rect x="422" y="301" width="1" height="1" fill="#f00"/>
<rect x="427" y="301" width="1" height="1" fill="#f00"/>
<rect x="433" y="301" width="1" height="1" fill="#f00"/>
<rect x="438" y="301" width="1" height="1" fill="#f00"/>
<rect x="443" y="301" width="1" height="1" fill="#f00"/>
<rect x="449" y="301" width="1" height="1" fill="#f00"/>
<rect x="454" y="301" width="1" height="1" fill="#f00"/>
<rect x="459" y="301" width="1" height="1" fill="#f00"/>
<rect x="465" y="301" width="1" height="1" fill="#f00"/>
<rect x="470" y="301" width="1" height="1" fill="#f00"/>
<rect x="475" y="301" width="1" height="1" fill="#f00"/>
<rect x="481" y="301" width="1" height="1" fill="#f00"/>
<rect x="486" y="301" width="1" height="1" fill="#f00"/>
<rect x="491" y="301" width="1" height="1" fill="#f00"/>
<rect x="497" y="301" width="1" height="1" fill="#f00"/>
<rect x="502" y="301" width="1" height="1" fill="#f00"/>
<rect x="507" y="301" width="1" height="1" fill="#f00"/>
<rect x="513" y="301" width="1" height="1" fill="#f00"/>
<rect x="518" y="301" width="1" height="1" fill="#f00"/>
<rect x="523" y="301" width="1" height="1" fill="#f00"/>
<rect x="529" y="301" width="1" height="1" fill="#f00"/>
<rect x="534" y="301" width="1" height="1" fill="#f00"/>
<rect x="539" y="301" width="1" height="1" fill="#f00"/>
<rect x="545" y="301" width="1" height="1" fill="#f00"/>
<rect x="550" y="301" width="1" height="1" fill="#f00"/>
<rect x="555" y="301" width="1" height="1" fill="#f00"/>
<rect x="561" y="301" width="1" height="1" fill="#f00"/>
<rect x="566" y="301" width="1" height="1" fill="#f00"/>
<rect x="571" y="301" width="1" height="1" fill="#f00"/>
<rect x="577" y="301" width="1" height="1" fill="#f00"/>
<rect x="582" y="301" width="1" height="1" fill="#f00"/>
<rect x="587" y="301" width="1" height="1" fill="#f00"/>
<rect x="593" y="301" width="1" height="1" fill="#f00"/>
<rect x="598" y="301" width="1" height="1" fill="#f00"/>
<rect x="603" y="301" width="1" height="1" fill="#f00"/>
<rect x="609" y="301" width="1" height="1" fill="#f00"/>
<rect x="614" y="301" width="1" height="1" fill="#f00"/>
<rect x="619" y="301" width="1" height="1" fill="#f00"/>
<rect x="273" y="317" width="1" height="1" fill="#f00"/>
<rect x="278" y="317" width="1" height="1" fill="#f00"/>
<rect x="283" y="317" width="1" height="1" fill="#f00"/>
<rect x="289" y="317" width="1" height="1" fill="#f00"/>
<rect x="294" y="317" width="1" height="1" fill="#f00"/>
<rect x="299" y="317" width="1" height="1" fill="#f00"/>
<rect x="305" y="317" width="1" height="1" fill="#f00"/>
<rect x="310" y="317" width="1" height="1" fill="#f00"/>
<rect x="315" y="317" width="1" height="1" fill="#f00"/>
<rect x="321" y="317" width="1" height="1" fill="#f00"/>
<rect x="326" y="317" width="1" height="1" fill="#f00"/>
<rect x="331" y="317" width="1" height="1" fill="#f00"/>
<rect x="337" y="317" width="1" height="1" fill="#f00"/>
<rect x="342" y="317" width="1" height="1" fill="#f00"/>
<rect x="347" y="317" width="1" height="1" fill="#f00"/>
<rect x="353" y="317" width="1" height="1" fill="#f00"/>
<rect x="358" y="317" width="1" height="1" fill="#f00"/>
<rect x="363" y="317" width="1" height="1" fill="#f00"/>
<rect x="369" y="317" width="1" height="1" fill="#f00"/>
<rect x="374" y="317" width="1" height="1" fill="#f00"/>
<rect x="379" y="317" width="1" height="1" fill="#f00"/>
<rect x="385" y="317" width="1" height="1" fill="#f00"/>
<rect x="390" y="317" width="1" height="1" fill="#f00"/>
<rect x="395" y="317" width="1" height="1" fill="#f00"/>
<rect x="401" y="317" width="1" height="1" fill="#f00"/>
<rect x="406" y="317" width="1" height="1" fill="#f00"/>
<rect x="411" y="317" width="1" height="1" fill="#f00"/>
<rect x="417" y="317" width="1" height="1" fill="#f00"/>
<rect x="422" y="317" width="1" height="1" fill="#f00"/>
<rect x="427" y="317" width="1" height="1" fill="#f00"/>
<rect x="433" y="317" width="1" height="1" fill="#f00"/>
<rect x="438" y="317" width="1" height="1" fill="#f00"/>
<rect x="443" y="317" width="1" height="1" fill="#f00"/>
<rect x="449" y="317" width="1" height="1" fill="#f00"/>
<rect x="454" y="317" width="1" height="1" fill="#f00"/>
<rect x="459" y="317" width="1" height="1" fill="#f00"/>
<rect x="465" y="317" width="1" height="1" fill="#f00"/>
<rect x="470" y="317" width="1" height="1" fill="#f00"/>
<rect x="475" y="317" width="1" height="1" fill="#f00"/>
<rect x="481" y="317" width="1" height="1" fill="#f00"/>
<rect x="486" y="317" width="1" height="1" fill="#f00"/>
<rect x="491" y="317" width="1" height="1" fill="#f00"/>
<rect x="497" y="317" width="1" height="1" fill="#f00"/>
<rect x="502" y="317" width="1" height="1" fill="#f00"/>
<rect x="507" y="317" width="1" height="1" fill="#f00"/>
<rect x="513" y="317" width="1" height="1" fill="#f00"/>
<rect x="518" y="317" width="1" height="1" fill="#f00"/>
<rect x="523" y="317" width="1" height="1" fill="#f00"/>
<rect x="529" y="317" width="1" height="1" fill="#f00"/>
<rect x="534" y="317" width="1" height="1" fill="#f00"/>
<rect x="539" y="317" width="1" height="1" fill="#f00"/>
<rect x="545" y="317" width="1" height="1" fill="#f00"/>
<rect x="550" y="317" width="1" height="1" fill="#f00"/>
<rect x="555" y="317" width="1" height="1" fill="#f00"/>
<rect x="561" y="317" width="1" height="1" fill="#f00"/>
<rect x="566" y="317" width="1" height="1" fill="#f00"/>
<rect x="571" y="317" width="1" height="1" fill="#f00"/>
<rect x="577" y="317" width="1" height="1" fill="#f00"/>
<rect x="582" y="317" width="1" height="1" fill="#f00"/>
<rect x="587" y="317" width="1" height="1" fill="#f00"/>
<rect x="593" y="317" width="1" height="1" fill="#f00"/>
<rect x="598" y="317" width="1" height="1" fill="#f00"/>
<rect x="603" y="317" width="1" height="1" fill="#f00"/>
<rect x="609" y="317" width="1" height="1" fill="#f00"/>
<rect x="614" y="317" width="1" height="1" fill="#f00"/>
<rect x="619" y="317" width="1" height="1" fill="#f00"/>
<rect x="273" y="333" width="1" height="1" fill="#f00"/>
<rect x="276" y="333" width="1" height="1" fill="#f00"/>
<rect x="279" y="333" width="1" height="1" fill="#f00"/>
<rect x="282" y="333" width="1" height="1" fill="#f00"/>
<rect x="285" y="333" width="1" height="1" fill="#f00"/>
<rect x="289" y="333" width="1" height="1" fill="#f00"/>
<rect x="292" y="333" width="1" height="1" fill="#f00"/>
<rect x="295" y="333" width="1" height="1" fill="#f00"/>
<rect x="298" y="333" width="1" height="1" fill="#f00"/>
<rect x="301" y="333" width="1" height="1" fill="#f00"/>
<rect x="305" y="333" width="1" height="1" fill="#f00"/>
<rect x="308" y="333" width="1" height="1" fill="#f00"/>
<rect x="311" y="333" width="1" height="1" fill="#f00"/>
<rect x="314" y="333" width="1" height="1" fill="#f00"/>
<rect x="317" y="333" width="1" height="1" fill="#f00"/>
<rect x="321" y="333" width="1" height="1" fill="#f00"/>
<rect x="324" y="333" width="1" height="1" fill="#f00"/>
<rect x="327" y="333" width="1" height="1" fill="#f00"/>
<rect x="330" y="333" width="1" height="1" fill="#f00"/>
<rect x="333" y="333" width="1" height="1" fill="#f00"/>
<rect x="337" y="333" width="1" height="1" fill="#f00"/>
<rect x="340" y="333" width="1" height="1" fill="#f00"/>
<rect x="343" y="333" width="1" height="1" fill="#f00"/>
<rect x="346" y="333" width="1" height="1" fill="#f00"/>
<rect x="349" y="333" width="1" height="1" fill="#f00"/>
<rect x="353" y="333" width="1" height="1" fill="#f00"/>
<rect x="356" y="333" width="1" height="1" fill="#f00"/>
<rect x="359" y="333" width="1" height="1" fill="#f00"/>
<rect x="362" y="333" width="1" height="1" fill="#f00"/>
<rect x="365" y="333" width="1" height="1" fill="#f00"/>
<rect x="369" y="333" width="1" height="1" fill="#f00"/>
<rect x="372" y="333" width="1" height="1" fill="#f00"/>
<rect x="375" y="333" width="1" height="1" fill="#f00"/>
<rect x="378" y="333" width="1" height="1" fill="#f00"/>
<rect x="381" y="333" width="1" height="1" fill="#f00"/>
<rect x="385" y="333" width="1" height="1" fill="#f00"/>
<rect x="388" y="333" width="1" height="1" fill="#f00"/>
<rect x="391" y="333" width="1" height="1" fill="#f00"/>
<rect x="394" y="333" width="1" height="1" fill="#f00"/>
<rect x="397" y="333" width="1" height="1" fill="#f00"/>
<rect x="401" y="333" width="1" height="1" fill="#f00"/>
<rect x="404" y="333" width="1" height="1" fill="#f00"/>
<rect x="407" y="333" width="1" height="1" fill="#f00"/>
<rect x="410" y="333" width="1" height="1" fill="#f00"/>
<rect x="413" y="333" width="1" height="1" fill="#f00"/>
<rect x="417" y="333" width="1" height="1" fill="#f00"/>
<rect x="420" y="333" width="1" height="1" fill="#f00"/>
<rect x="423" y="333" width="1" height="1" fill="#f00"/>
<rect x="426" y="333" width="1" height="1" fill="#f00"/>
<rect x="429" y="333" width="1" height="1" fill="#f00"/>
<rect x="433" y="333" width="1" height="1" fill="#f00"/>
<rect x="436" y="333" width="1" height="1" fill="#f00"/>
<rect x="439" y="333" width="1" height="1" fill="#f00"/>
<rect x="442" y="333" width="1" height="1" fill="#f00"/>
<rect x="445" y="333" width="1" height="1" fill="#f00"/>
<rect x="449" y="333" width="1" height="1" fill="#f00"/>
<rect x="452" y="333" width="1" height="1" fill="#f00"/>
<rect x="455" y="333" width="1" height="1" fill="#f00"/>
<rect x="458" y="333" width="1" height="1" fill="#f00"/>
<rect x="461" y="333" width="1" height="1" fill="#f00"/>
<rect x="465" y="333" width="1" height="1" fill="#f00"/>
<rect x="468" y="333" width="1" height="1" fill="#f00"/>
<rect x="471" y="333" width="1" height="1" fill="#f00"/>
<rect x="474" y="333" width="1" height="1" fill="#f00"/>
<rect x="477" y="333" width="1" height="1" fill="#f00"/>
<rect x="481" y="333" width="1" height="1" fill="#f00"/>
<rect x="484" y="333" width="1" height="1" fill="#f00"/>
<rect x="487" y="333" width="1" height="1" fill="#f00"/>
<rect x="490" y="333" width="1" height="1" fill="#f00"/>
<rect x="493" y="333" width="1" height="1" fill="#f00"/>
<rect x="497" y="333" width="1" height="1" fill="#f00"/>
<rect x="500" y="333" width="1" height="1" fill="#f00"/>
<rect x="503" y="333" width="1" height="1" fill="#f00"/>
<rect x="506" y="333" width="1" height="1" fill="#f00"/>
<rect x="509" y="333" width="1" height="1" fill="#f00"/>
<rect x="513" y="333" width="1" height="1" fill="#f00"/>
<rect x="516" y="333" width="1" height="1" fill="#f00"/>
<rect x="519" y="333" width="1" height="1" fill="#f00"/>
<rect x="522" y="333" width="1" height="1" fill="#f00"/>
<rect x="525" y="333" width="1" height="1" fill="#f00"/>
<rect x="529" y="333" width="1" height="1" fill="#f00"/>
<rect x="532" y="333" width="1" height="1" fill="#f00"/>
<rect x="535" y="333" width="1" height="1" fill="#f00"/>
<rect x="538" y="333" width="1" height="1" fill="#f00"/>
<rect x="541" y="333" width="1" height="1" fill="#f00"/>
<rect x="545" y="333" width="1" height="1" fill="#f00"/>
<rect x="548" y="333" width="1" height="1" fill="#f00"/>
<rect x="551" y="333" width="1" height="1" fill="#f00"/>
<rect x="554" y="333" width="1" height="1" fill="#f00"/>
<rect x="557" y="333" width="1" height="1" fill="#f00"/>
<rect x="561" y="333" width="1" height="1" fill="#f00"/>
<rect x="564" y="333" width="1" height="1" fill="#f00"/>
<rect x="567" y="333" width="1" height="1" fill="#f00"/>
<rect x="570" y="333" width="1" height="1" fill="#f00"/>
<rect x="573" y="333" width="1" height="1" fill="#f00"/>
<rect x="577" y="333" width="1" height="1" fill="#f00"/>
<rect x="580" y="333" width="1" height="1" fill="#f00"/>
<rect x="583" y="333" width="1" height="1" fill="#f00"/>
<rect x="586" y="333" width="1" height="1" fill="#f00"/>
<rect x="589" y="333" width="1" height="1" fill="#f00"/>
<rect x="593" y="333" width="1" height="1" fill="#f00"/>
<rect x="596" y="333" width="1" height="1" fill="#f00"/>
<rect x="599" y="333" width="1" height="1" fill="#f00"/>
<rect x="602" y="333" width="1" height="1" fill="#f00"/>
<rect x="605" y="333" width="1" height="1" fill="#f00"/>
<rect x="609" y="333" width="1" height="1" fill="#f00"/>
<rect x="612" y="333" width="1" height="1" fill="#f00"/>
<rect x="615" y="333" width="1" height="1" fill="#f00"/>
<rect x="618" y="333" width="1" height="1" fill="#f00"/>
<rect x="621" y="333" width="1" height="1" fill="#f00"/>
<rect x="273" y="349" width="1" height="1" fill="#f00"/>
<rect x="278" y="349" width="1" height="1" fill="#f00"/>
<rect x="283" y="349" width="1" height="1" fill="#f00"/>
<rect x="289" y="349" width="1" height="1" fill="#f00"/>
<rect x="294" y="349" width="1" height="1" fill="#f00"/>
<rect x="299" y="349" width="1" height="1" fill="#f00"/>
<rect x="305" y="349" width="1" height="1" fill="#f00"/>
<rect x="310" y="349" width="1" height="1" fill="#f00"/>
<rect x="315" y="349" width="1" height="1" fill="#f00"/>
<rect x="321" y="349" width="1" height="1" fill="#f00"/>
<rect x="326" y="349" width="1" height="1" fill="#f00"/>
<rect x="331" y="349" width="1" height="1" fill="#f00"/>
<rect x="337" y="349" width="1" height="1" fill="#f00"/>
<rect x="342" y="349" width="1" height="1" fill="#f00"/>
<rect x="347" y="349" width="1" height="1" fill="#f00"/>
<rect x="353" y="349" width="1" height="1" fill="#f00"/>
<rect x="358" y="349" width="1" height="1" fill="#f00"/>
<rect x="363" y="349" width="1" height="1" fill="#f00"/>
<rect x="369" y="349" width="1" height="1" fill="#f00"/>
<rect x="374" y="349" width="1" height="1" fill="#f00"/>
<rect x="379" y="349" width="1" height="1" fill="#f00"/>
<rect x="385" y="349" width="1" height="1" fill="#f00"/>
<rect x="390" y="349" width="1" height="1" fill="#f00"/>
<rect x="395" y="349" width="1" height="1" fill="#f00"/>
<rect x="401" y="349" width="1" height="1" fill="#f00"/>
<rect x="406" y="349" width="1" height="1" fill="#f00"/>
<rect x="411" y="349" width="1" height="1" fill="#f00"/>
<rect x="417" y="349" width="1" height="1" fill="#f00"/>
<rect x="422" y="349" width="1" height="1" fill="#f00"/>
<rect x="427" y="349" width="1" height="1" fill="#f00"/>
<rect x="433" y="349" width="1" height="1" fill="#f00"/>
<rect x="438" y="349" width="1" height="1" fill="#f00"/>
<rect x="443" y="349" width="1" height="1" fill="#f00"/>
<rect x="449" y="349" width="1" height="1" fill="#f00"/>
<rect x="454" y="349" width="1" height="1" fill="#f00"/>
<rect x="459" y="349" width="1" height="1" fill="#f00"/>
<rect x="465" y="349" width="1" height="1" fill="#f00"/>
<rect x="470" y="349" width="1" height="1" fill="#f00"/>
<rect x="475" y="349" width="1" height="1" fill="#f00"/>
<rect x="481" y="349" width="1" height="1" fill="#f00"/>
<rect x="486" y="349" width="1" height="1" fill="#f00"/>
<rect x="491" y="349" width="1" height="1" fill="#f00"/>
<rect x="497" y="349" width="1" height="1" fill="#f00"/>
<rect x="502" y="349" width="1" height="1" fill="#f00"/>
<rect x="507" y="349" width="1" height="1" fill="#f00"/>
<rect x="513" y="349" width="1" height="1" fill="#f00"/>
<rect x="518" y="349" width="1" height="1" fill="#f00"/>
<rect x="523" y="349" width="1" height="1" fill="#f00"/>
<rect x="529" y="349" width="1" height="1" fill="#f00"/>
<rect x="534" y="349" width="1" height="1" fill="#f00"/>
<rect x="539" y="349" width="1" height="1" fill="#f00"/>
<rect x="545" y="349" width="1" height="1" fill="#f00"/>
<rect x="550" y="349" width="1" height="1" fill="#f00"/>
<rect x="555" y="349" width="1" height="1" fill="#f00"/>
<rect x="561" y="349" width="1" height="1" fill="#f00"/>
<rect x="566" y="349" width="1" height="1" fill="#f00"/>
<rect x="571" y="349" width="1" height="1" fill="#f00"/>
<rect x="577" y="349" width="1" height="1" fill="#f00"/>
<rect x="582" y="349" width="1" height="1" fill="#f00"/>
<rect x="587" y="349" width="1" height="1" fill="#f00"/>
<rect x="593" y="349" width="1" height="1" fill="#f00"/>
<rect x="598" y="349" width="1" height="1" fill="#f00"/>
<rect x="603" y="349" width="1" height="1" fill="#f00"/>
<rect x="609" y="349" width="1" height="1" fill="#f00"/>
<rect x="614" y="349" width="1" height="1" fill="#f00"/>
<rect x="619" y="349" width="1" height="1" fill="#f00"/>
<rect x="273" y="365" width="1" height="1" fill="#f00"/>
<rect x="278" y="365" width="1" height="1" fill="#f00"/>
<rect x="283" y="365" width="1" height="1" fill="#f00"/>
<rect x="289" y="365" width="1" height="1" fill="#f00"/>
<rect x="294" y="365" width="1" height="1" fill="#f00"/>
<rect x="299" y="365" width="1" height="1" fill="#f00"/>
<rect x="305" y="365" width="1" height="1" fill="#f00"/>
<rect x="310" y="365" width="1" height="1" fill="#f00"/>
<rect x="315" y="365" width="1" height="1" fill="#f00"/>
<rect x="321" y="365" width="1" height="1" fill="#f00"/>
<rect x="326" y="365" width="1" height="1" fill="#f00"/>
<rect x="331" y="365" width="1" height="1" fill="#f00"/>
<rect x="337" y="365" width="1" height="1" fill="#f00"/>
<rect x="342" y="365" width="1" height="1" fill="#f00"/>
<rect x="347" y="365" width="1" height="1" fill="#f00"/>
<rect x="353" y="365" width="1" height="1" fill="#f00"/>
<rect x="358" y="365" width="1" height="1" fill="#f00"/>
<rect x="363" y="365" width="1" height="1" fill="#f00"/>
<rect x="369" y="365" width="1" height="1" fill="#f00"/>
<rect x="374" y="365" width="1" height="1" fill="#f00"/>
<rect x="379" y="365" width="1" height="1" fill="#f00"/>
<rect x="385" y="365" width="1" height="1" fill="#f00"/>
<rect x="390" y="365" width="1" height="1" fill="#f00"/>
<rect x="395" y="365" width="1" height="1" fill="#f00"/>
<rect x="401" y="365" width="1" height="1" fill="#f00"/>
<rect x="406" y="365" width="1" height="1" fill="#f00"/>
<rect x="411" y="365" width="1" height="1" fill="#f00"/>
<rect x="417" y="365" width="1" height="1" fill="#f00"/>
<rect x="422" y="365" width="1" height="1" fill="#f00"/>
<rect x="427" y="365" width="1" height="1" fill="#f00"/>
<rect x="433" y="365" width="1" height="1" fill="#f00"/>
<rect x="438" y="365" width="1" height="1" fill="#f00"/>
<rect x="443" y="365" width="1" height="1" fill="#f00"/>
<rect x="449" y="365" width="1" height="1" fill="#f00"/>
<rect x="454" y="365" width="1" height="1" fill="#f00"/>
<rect x="459" y="365" width="1" height="1" fill="#f00"/>
<rect x="465" y="365" width="1" height="1" fill="#f00"/>
<rect x="470" y="365" width="1" height="1" fill="#f00"/>
<rect x="475" y="365" width="1" height="1" fill="#f00"/>
<rect x="481" y="365" width="1" height="1" fill="#f00"/>
<rect x="486" y="365" width="1" height="1" fill="#f00"/>
<rect x="491" y="365" width="1" height="1" fill="#f00"/>
<rect x="497" y="365" width="1" height="1" fill="#f00"/>
<rect x="502" y="365" width="1" height="1" fill="#f00"/>
<rect x="507" y="365" width="1" height="1" fill="#f00"/>
<rect x="513" y="365" width="1" height="1" fill="#f00"/>
<rect x="518" y="365" width="1" height="1" fill="#f00"/>
<rect x="523" y="365" width="1" height="1" fill="#f00"/>
<rect x="529" y="365" width="1" height="1" fill="#f00"/>
<rect x="534" y="365" width="1" height="1" fill="#f00"/>
<rect x="539" y="365" width="1" height="1" fill="#f00"/>
<rect x="545" y="365" width="1" height="1" fill="#f00"/>
<rect x="550" y="365" width="1" height="1" fill="#f00"/>
<rect x="555" y="365" width="1" height="1" fill="#f00"/>
<rect x="561" y="365" width="1" height="1" fill="#f00"/>
<rect x="566" y="365" width="1" height="1" fill="#f00"/>
<rect x="571" y="365" width="1" height="1" fill="#f00"/>
<rect x="577" y="365" width="1" height="1" fill="#f00"/>
<rect x="582" y="365" width="1" height="1" fill="#f00"/>
<rect x="587" y="365" width="1" height="1" fill="#f00"/>
<rect x="593" y="365" width="1" height="1" fill="#f00"/>
<rect x="598" y="365" width="1" height="1" fill="#f00"/>
<rect x="603" y="365" width="1" height="1" fill="#f00"/>
<rect x="609" y="365" width="1" height="1" fill="#f00"/>
<rect x="614" y="365" width="1" height="1" fill="#f00"/>
<rect x="619" y="365" width="1" height="1" fill="#f00"/>
<rect x="273" y="381" width="1" height="1" fill="#f00"/>
<rect x="278" y="381" width="1" height="1" fill="#f00"/>
<rect x="283" y="381" width="1" height="1" fill="#f00"/>
<rect x="289" y="381" width="1" height="1" fill="#f00"/>
<rect x="294" y="381" width="1" height="1" fill="#f00"/>
<rect x="299" y="381" width="1" height="1" fill="#f00"/>
<rect x="305" y="381" width="1" height="1" fill="#f00"/>
<rect x="310" y="381" width="1" height="1" fill="#f00"/>
<rect x="315" y="381" width="1" height="1" fill="#f00"/>
<rect x="321" y="381" width="1" height="1" fill="#f00"/>
<rect x="326" y="381" width="1" height="1" fill="#f00"/>
<rect x="331" y="381" width="1" height="1" fill="#f00"/>
<rect x="337" y="381" width="1" height="1" fill="#f00"/>
<rect x="342" y="381" width="1" height="1" fill="#f00"/>
<rect x="347" y="381" width="1" height="1" fill="#f00"/>
<rect x="353" y="381" width="1" height="1" fill="#f00"/>
<rect x="358" y="381" width="1" height="1" fill="#f00"/>
<rect x="363" y="381" width="1" height="1" fill="#f00"/>
<rect x="369" y="381" width="1" height="1" fill="#f00"/>
<rect x="374" y="381" width="1" height="1" fill="#f00"/>
<rect x="379" y="381" width="1" height="1" fill="#f00"/>
<rect x="385" y="381" width="1" height="1" fill="#f00"/>
<rect x="390" y="381" width="1" height="1" fill="#f00"/>
<rect x="395" y="381" width="1" height="1" fill="#f00"/>
<rect x="401" y="381" width="1" height="1" fill="#f00"/>
<rect x="406" y="381" width="1" height="1" fill="#f00"/>
<rect x="411" y="381" width="1" height="1" fill="#f00"/>
<rect x="417" y="381" width="1" height="1" fill="#f00"/>
<rect x="422" y="381" width="1" height="1" fill="#f00"/>
<rect x="427" y="381" width="1" height="1" fill="#f00"/>
<rect x="433" y="381" width="1" height="1" fill="#f00"/>
<rect x="438" y="381" width="1" height="1" fill="#f00"/>
<rect x="443" y="381" width="1" height="1" fill="#f00"/>
<rect x="449" y="381" width="1" height="1" fill="#f00"/>
<rect x="454" y="381" width="1" height="1" fill="#f00"/>
<rect x="459" y="381" width="1" height="1" fill="#f00"/>
<rect x="465" y="381" width="1" height="1" fill="#f00"/>
<rect x="470" y="381" width="1" height="1" fill="#f00"/>
<rect x="475" y="381" width="1" height="1" fill="#f00"/>
<rect x="481" y="381" width="1" height="1" fill="#f00"/>
<rect x="486" y="381" width="1" height="1" fill="#f00"/>
<rect x="491" y="381" width="1" height="1" fill="#f00"/>
<rect x="497" y="381" width="1" height="1" fill="#f00"/>
<rect x="502" y="381" width="1" height="1" fill="#f00"/>
<rect x="507" y="381" width="1" height="1" fill="#f00"/>
<rect x="513" y="381" width="1" height="1" fill="#f00"/>
<rect x="518" y="381" width="1" height="1" fill="#f00"/>
<rect x="523" y="381" width="1" height="1" fill="#f00"/>
<rect x="529" y="381" width="1" height="1" fill="#f00"/>
<rect x="534" y="381" width="1" height="1" fill="#f00"/>
<rect x="539" y="381" width="1" height="1" fill="#f00"/>
<rect x="545" y="381" width="1" height="1" fill="#f00"/>
<rect x="550" y="381" width="1" height="1" fill="#f00"/>
<rect x="555" y="381" width="1" height="1" fill="#f00"/>
<rect x="561" y="381" width="1" height="1" fill="#f00"/>
<rect x="566" y="381" width="1" height="1" fill="#f00"/>
<rect x="571" y="381" width="1" height="1" fill="#f00"/>
<rect x="577" y="381" width="1" height="1" fill="#f00"/>
<rect x="582" y="381" width="1" height="1" fill="#f00"/>
<rect x="587" y="381" width="1" height="1" fill="#f00"/>
<rect x="593" y="381" width="1" height="1" fill="#f00"/>
<rect x="598" y="381" width="1" height="1" fill="#f00"/>
<rect x="603" y="381" width="1" height="1" fill="#f00"/>
<rect x="609" y="381" width="1" height="1" fill="#f00"/>
<rect x="614" y="381" width="1" height="1" fill="#f00"/>
<rect x="619" y="381" width="1" height="1" fill="#f00"/>
<rect x="273" y="397" width="1" height="1" fill="#f00"/>
<rect x="278" y="397" width="1" height="1" fill="#f00"/>
<rect x="283" y="397" width="1" height="1" fill="#f00"/>
<rect x="289" y="397" width="1" height="1" fill="#f00"/>
<rect x="294" y="397" width="1" height="1" fill="#f00"/>
<rect x="299" y="397" width="1" height="1" fill="#f00"/>
<rect x="305" y="397" width="1" height="1" fill="#f00"/>
<rect x="310" y="397" width="1" height="1" fill="#f00"/>
<rect x="315" y="397" width="1" height="1" fill="#f00"/>
<rect x="321" y="397" width="1" height="1" fill="#f00"/>
<rect x="326" y="397" width="1" height="1" fill="#f00"/>
<rect x="331" y="397" width="1" height="1" fill="#f00"/>
<rect x="337" y="397" width="1" height="1" fill="#f00"/>
<rect x="342" y="397" width="1" height="1" fill="#f00"/>
<rect x="347" y="397" width="1" height="1" fill="#f00"/>
<rect x="353" y="397" width="1" height="1" fill="#f00"/>
<rect x="358" y="397" width="1" height="1" fill="#f00"/>
<rect x="363" y="397" width="1" height="1" fill="#f00"/>
<rect x="369" y="397" width="1" height="1" fill="#f00"/>
<rect x="374" y="397" width="1" height="1" fill="#f00"/>
<rect x="379" y="397" width="1" height="1" fill="#f00"/>
<rect x="385" y="397" width="1" height="1" fill="#f00"/>
<rect x="390" y="397" width="1" height="1" fill="#f00"/>
<rect x="395" y="397" width="1" height="1" fill="#f00"/>
<rect x="401" y="397" width="1" height="1" fill="#f00"/>
<rect x="406" y="397" width="1" height="1" fill="#f00"/>
<rect x="411" y="397" width="1" height="1" fill="#f00"/>
<rect x="417" y="397" width="1" height="1" fill="#f00"/>
<rect x="422" y="397" width="1" height="1" fill="#f00"/>
<rect x="427" y="397" width="1" height="1" fill="#f00"/>
<rect x="433" y="397" width="1" height="1" fill="#f00"/>
<rect x="438" y="397" width="1" height="1" fill="#f00"/>
<rect x="443" y="397" width="1" height="1" fill="#f00"/>
<rect x="449" y="397" width="1" height="1" fill="#f00"/>
<rect x="454" y="397" width="1" height="1" fill="#f00"/>
<rect x="459" y="397" width="1" height="1" fill="#f00"/>
<rect x="465" y="397" width="1" height="1" fill="#f00"/>
<rect x="470" y="397" width="1" height="1" fill="#f00"/>
<rect x="475" y="397" width="1" height="1" fill="#f00"/>
<rect x="481" y="397" width="1" height="1" fill="#f00"/>
<rect x="486" y="397" width="1" height="1" fill="#f00"/>
<rect x="491" y="397" width="1" height="1" fill="#f00"/>
<rect x="497" y="397" width="1" height="1" fill="#f00"/>
<rect x="502" y="397" width="1" height="1" fill="#f00"/>
<rect x="507" y="397" width="1" height="1" fill="#f00"/>
<rect x="513" y="397" width="1" height="1" fill="#f00"/>
<rect x="518" y="397" width="1" height="1" fill="#f00"/>
<rect x="523" y="397" width="1" height="1" fill="#f00"/>
<rect x="529" y="397" width="1" height="1" fill="#f00"/>
<rect x="534" y="397" width="1" height="1" fill="#f00"/>
<rect x="539" y="397" width="1" height="1" fill="#f00"/>
<rect x="545" y="397" width="1" height="1" fill="#f00"/>
<rect x="550" y="397" width="1" height="1" fill="#f00"/>
<rect x="555" y="397" width="1" height="1" fill="#f00"/>
<rect x="561" y="397" width="1" height="1" fill="#f00"/>
<rect x="566" y="397" width="1" height="1" fill="#f00"/>
<rect x="571" y="397" width="1" height="1" fill="#f00"/>
<rect x="577" y="397" width="1" height="1" fill="#f00"/>
<rect x="582" y="397" width="1" height="1" fill="#f00"/>
<rect x="587" y="397" width="1" height="1" fill="#f00"/>
<rect x="593" y="397" width="1" height="1" fill="#f00"/>
<rect x="598" y="397" width="1" height="1" fill="#f00"/>
<rect x="603" y="397" width="1" height="1" fill="#f00"/>
<rect x="609" y="397" width="1" height="1" fill="#f00"/>
<rect x="614" y="397" width="1" height="1" fill="#f00"/>
<rect x="619" y="397" width="1" height="1" fill="#f00"/>
<rect x="335" y="354" width="11" height="44" fill="#0f0"/>
<rect x="339" y="381" width="11" height="17" fill="#ff0"/>
<rect x="339" y="381" width="7" height="17" fill="#0ff"/>
<rect x="342" y="381" width="1" height="1" fill="#000"/>
<rect x="342" y="397" width="1" height="1" fill="#000"/>
<rect x="337" y="365" width="1" height="1" fill="#f0f"/>
<rect x="342" y="365" width="1" height="1" fill="#f0f"/>
<rect x="337" y="381" width="1" height="1" fill="#f0f"/>
<rect x="347" y="381" width="1" height="1" fill="#00f"/>
<rect x="337" y="397" width="1" height="1" fill="#f0f"/>
<rect x="347" y="397" width="1" height="1" fill="#00f"/>
<rect x="370" y="348" width="11" height="50" fill="#0f0"/>
<rect x="374" y="355" width="11" height="43" fill="#ff0"/>
<rect x="374" y="355" width="7" height="43" fill="#0ff"/>
<rect x="374" y="365" width="1" height="1" fill="#000"/>
<rect x="379" y="365" width="1" height="1" fill="#000"/>
<rect x="374" y="381" width="1" height="1" fill="#000"/>
<rect x="379" y="381" width="1" height="1" fill="#000"/>
<rect x="374" y="397" width="1" height="1" fill="#000"/>
<rect x="379" y="397" width="1" height="1" fill="#000"/>
<rect x="374" y="349" width="1" height="1" fill="#f0f"/>
<rect x="379" y="349" width="1" height="1" fill="#f0f"/>
<rect x="405" y="351" width="11" height="47" fill="#0f0"/>
<rect x="409" y="356" width="11" height="42" fill="#ff0"/>
<rect x="409" y="356" width="7" height="42" fill="#0ff"/>
<rect x="411" y="365" width="1" height="1" fill="#000"/>
<rect x="411" y="381" width="1" height="1" fill="#000"/>
<rect x="411" y="397" width="1" height="1" fill="#000"/>
<rect x="406" y="365" width="1" height="1" fill="#f0f"/>
<rect x="417" y="365" width="1" height="1" fill="#00f"/>
<rect x="406" y="381" width="1" height="1" fill="#f0f"/>
<rect x="417" y="381" width="1" height="1" fill="#00f"/>
<rect x="406" y="397" width="1" height="1" fill="#f0f"/>
<rect x="417" y="397" width="1" height="1" fill="#00f"/>
<rect x="441" y="367" width="11" height="31" fill="#0f0"/>
<rect x="445" y="369" width="11" height="29" fill="#ff0"/>
<rect x="445" y="369" width="7" height="29" fill="#0ff"/>
<rect x="449" y="381" width="1" height="1" fill="#000"/>
<rect x="449" y="397" width="1" height="1" fill="#000"/>
<rect x="443" y="381" width="1" height="1" fill="#f0f"/>
<rect x="454" y="381" width="1" height="1" fill="#00f"/>
<rect x="443" y="397" width="1" height="1" fill="#f0f"/>
<rect x="454" y="397" width="1" height="1" fill="#00f"/>
<rect x="476" y="360" width="11" height="38" fill="#0f0"/>
<rect x="480" y="366" width="11" height="32" fill="#ff0"/>
<rect x="480" y="366" width="7" height="32" fill="#0ff"/>
<rect x="481" y="381" width="1" height="1" fill="#000"/>
<rect x="486" y="381" width="1" height="1" fill="#000"/>
<rect x="481" y="397" width="1" height="1" fill="#000"/>
<rect x="486" y="397" width="1" height="1" fill="#000"/>
<rect x="481" y="365" width="1" height="1" fill="#f0f"/>
<rect x="486" y="365" width="1" height="1" fill="#f0f"/>
<rect x="511" y="373" width="11" height="25" fill="#0f0"/>
<rect x="515" y="363" width="11" height="35" fill="#ff0"/>
<rect x="515" y="373" width="7" height="25" fill="#0ff"/>
<rect x="518" y="381" width="1" height="1" fill="#000"/>
<rect x="518" y="397" width="1" height="1" fill="#000"/>
<rect x="518" y="365" width="1" height="1" fill="#00f"/>
<rect x="523" y="365" width="1" height="1" fill="#00f"/>
<rect x="513" y="381" width="1" height="1" fill="#f0f"/>
<rect x="523" y="381" width="1" height="1" fill="#00f"/>
<rect x="513" y="397" width="1" height="1" fill="#f0f"/>
<rect x="523" y="397" width="1" height="1" fill="#00f"/>
<rect x="546" y="378" width="11" height="20" fill="#0f0"/>
<rect x="550" y="362" width="11" height="36" fill="#ff0"/>
<rect x="550" y="378" width="7" height="20" fill="#0ff"/>
<rect x="550" y="381" width="1" height="1" fill="#000"/>
<rect x="555" y="381" width="1" height="1" fill="#000"/>
<rect x="550" y="397" width="1" height="1" fill="#000"/>
<rect x="555" y="397" width="1" height="1" fill="#000"/>
<rect x="550" y="365" width="1" height="1" fill="#00f"/>
<rect x="555" y="365" width="1" height="1" fill="#00f"/>
<rect x="581" y="358" width="11" height="40" fill="#0f0"/>
<rect x="585" y="356" width="11" height="42" fill="#ff0"/>
<rect x="585" y="358" width="7" height="40" fill="#0ff"/>
<rect x="587" y="365" width="1" height="1" fill="#000"/>
<rect x="587" y="381" width="1" height="1" fill="#000"/>
<rect x="587" y="397" width="1" height="1" fill="#000"/>
<rect x="582" y="365" width="1" height="1" fill="#f0f"/>
<rect x="593" y="365" width="1" height="1" fill="#00f"/>
<rect x="582" y="381" width="1" height="1" fill="#f0f"/>
<rect x="593" y="381" width="1" height="1" fill="#00f"/>
<rect x="582" y="397" width="1" height="1" fill="#f0f"/>
<rect x="593" y="397" width="1" height="1" fill="#00f"/>
<rect x="300" y="173" width="1" height="225" fill="#0f0"/>
<rect x="310" y="173" width="1" height="225" fill="#0f0"/>
<rect x="304" y="173" width="1" height="225" fill="#ff0"/>
<rect x="314" y="173" width="1" height="225" fill="#ff0"/>
<rect x="300" y="173" width="4" height="1" fill="#0f0"/>
<rect x="304" y="173" width="1" height="1" fill="#0ff"/>
<rect x="306" y="173" width="2" height="1" fill="#0ff"/>
<rect x="309" y="173" width="1" height="1" fill="#0ff"/>
<rect x="311" y="173" width="4" height="1" fill="#ff0"/>
<rect x="339" y="173" width="1" height="181" fill="#fff"/>
<rect x="339" y="354" width="1" height="27" fill="#00c"/>
<polygon points="337,385.5 341,385.5 343.5,389.5 341,393.5 337,393.5 334.5,389.5" fill="none" stroke="#00c" stroke-width="1"/>
<g shape-rendering="geometricPrecision" fill="none" stroke="#000">
<path d="M64,119.5 H9 Q4,119.5 4,124.5 V402 Q4,407.5 9,407.5 H200 Q204,407.5 204,403.5 V400" stroke-width="1.3"/>
<path d="M4,126 V401" stroke-width="2"/>
<path d="M144,119.5 H200 Q204,119.5 204,123.5 V128" stroke-width="1.3"/>
<path d="M204,400 V403" stroke-width="2"/>
</g>
<polygon points="203.5,132 207.5,139 199.5,139" fill="#000"/>
<polygon points="203.5,396 207.5,388 199.5,388" fill="#000"/>
<rect x="200" y="144" width="2" height="240" fill="#000"/>
<rect x="205" y="144" width="2" height="240" fill="#000"/>
<rect x="200" y="224" width="7" height="129" fill="#000"/>
<rect x="201" y="225" width="1" height="127" fill="#fff"/>
<rect x="205" y="225" width="1" height="127" fill="#fff"/>
<rect x="9" y="164" width="5" height="7" fill="#000"/>
<rect x="9" y="244" width="5" height="7" fill="#000"/>
<rect x="9" y="276" width="5" height="7" fill="#000"/>
<rect x="11" y="136" width="2" height="1" fill="#000"/>
<rect x="11" y="184" width="2" height="1" fill="#000"/>
<rect x="11" y="200" width="2" height="1" fill="#000"/>
<rect x="11" y="216" width="2" height="1" fill="#000"/>
<rect x="11" y="296" width="2" height="1" fill="#000"/>
<rect x="11" y="312" width="2" height="1" fill="#000"/>
<rect x="11" y="328" width="2" height="1" fill="#000"/>
<rect x="11" y="344" width="2" height="1" fill="#000"/>
<rect x="11" y="360" width="2" height="1" fill="#000"/>
<rect x="11" y="376" width="2" height="1" fill="#000"/>
<rect x="11" y="392" width="2" height="1" fill="#000"/>
<rect x="96" y="278" width="8" height="1" fill="#00f"/>
<g shape-rendering="geometricPrecision"><path d="M113.5,331 L118,325.5" stroke="#000" stroke-width="1.6"/><rect x="113" y="325" width="2" height="2"/><rect x="117" y="329.5" width="2" height="2"/></g>
<rect x="216" y="40" width="2" height="4" fill="#0f0"/>
<rect x="221" y="52" width="2" height="4" fill="#0f0"/>
<path shape-rendering="geometricPrecision" d="M222.3,40 L216.7,56" stroke="#0f0" stroke-width="1.7"/>
<rect x="216" y="72" width="2" height="4" fill="#0f0"/>
<rect x="221" y="84" width="2" height="4" fill="#0f0"/>
<path shape-rendering="geometricPrecision" d="M222.3,72 L216.7,88" stroke="#0f0" stroke-width="1.7"/>
<rect x="112" y="384" width="48" height="16" fill="#000"/>
<rect x="112" y="391" width="8" height="8" fill="#fff"/>
<g shape-rendering="geometricPrecision">
<polygon points="50,13.5 88.5,52 50,90.5 11.5,52" fill="#c0c0c0" stroke="#000" stroke-width="1.2"/>
<polygon points="50,14.200000000000003 50,17 15,52 12.200000000000003,52" fill="#fff"/>
<polygon points="50,91 89,52 86.2,52 50,88.2" fill="#000"/>
<path d="M50,16.200000000000003 L85.8,52" stroke="#000" stroke-width="1.1" fill="none"/>
<path d="M14.200000000000003,52 L50,87.8" stroke="#000" stroke-width="1.1" fill="none"/>
<path d="M12.799999999999997,52 L50,89.2" stroke="#fff" stroke-width="1" fill="none"/>
<polygon points="50,21 81,52 50,83 19,52" fill="none" stroke="#000" stroke-width="1.6"/>
<path shape-rendering="geometricPrecision" d="M34.0,63.5 C38.0,57.5 42.0,57.5 46.0,56.5 S52.0,50.5 55.0,44.5 S60.0,38.5 64.0,37.0" fill="none" stroke="#000" stroke-width="1"/>
<path shape-rendering="geometricPrecision" d="M35.4,65.5 C39.4,59.5 43.4,59.5 47.4,58.5 S53.4,52.5 56.4,46.5 S61.4,40.5 65.4,39.0" fill="none" stroke="#000" stroke-width="1"/>
<path shape-rendering="geometricPrecision" d="M36.8,67.5 C40.8,61.5 44.8,61.5 48.8,60.5 S54.8,54.5 57.8,48.5 S62.8,42.5 66.8,41.0" fill="none" stroke="#000" stroke-width="1"/>
</g>
<g shape-rendering="geometricPrecision" stroke="#000" fill="none"><path d="M592,10 L606,24 M606,10 L592,24" stroke-width="1.1"/><path d="M595.5,15.5 V12 H602.5 V15.5" stroke-width="2.4"/><circle cx="595" cy="18" r="2.3" stroke-width="1.7"/><circle cx="603" cy="18" r="2.3" stroke-width="1.7"/><path d="M594.5,20 L596,23 L597,20 Z M601,20 L602,23 L603.5,20 Z" fill="#000" stroke="none"/><rect x="598" y="16" width="2" height="2" fill="#000" stroke="none"/></g>
<g shape-rendering="geometricPrecision" stroke="#000" fill="none" stroke-width="1.1"><path d="M610,10 L624,24 M624,10 L610,24"/><rect x="612.5" y="13.5" width="5" height="7"/><path d="M617.5,13.5 L620.5,10.5 V23.5 L617.5,20.5"/></g>
<g shape-rendering="geometricPrecision"><circle cx="628" cy="71" r="3.3" fill="#d8d8d8" stroke="#000" stroke-width="1.3"/><path d="M627.5,71.5 L624.5,71.5 A3.6,3.6 0 0 1 629,67.6 Z" fill="#000"/></g>
</svg>
<div id="tx">
<div class="t " style="left:128px;top:12px">THD 23456789</div>
<div class="t " style="left:264px;top:12px">Input RMS</div>
<div class="tall" style="left:96px;top:46px;color:#000">CH1</div>
<div class="tall" style="left:96px;top:78px;color:#000">CH2</div>
<div class="tall" style="left:135px;top:46px;color:#0f0">0.0005628</div>
<div class="tall" style="left:135px;top:78px;color:#0f0">0.0004503</div>
<div class="tall" style="left:255px;top:46px;color:#0f0">0.1097  V</div>
<div class="tall" style="left:255px;top:78px;color:#0f0">0.1096  V</div>
<div class="tall" style="left:408px;top:46px;color:#0f0">OFF</div>
<div class="tall" style="left:408px;top:78px;color:#0f0">OFF</div>
<div class="t n" style="left:496px;top:13px">GEN RUNNING</div>
<div class="t n" style="left:496px;top:29px">ANL 1:CONT 2:CONT</div>
<div class="t n" style="left:496px;top:45px">SWP OFF</div>
<div class="t n" style="left:496px;top:65px">Jan 28 2013</div>
<div class="t n" style="left:496px;top:81px">Mon 13:06:05</div>
<div class="tall" style="left:39px;top:46px;color:#000">R</div>
<div class="tall" style="left:55px;top:62px;color:#000">S</div>
<div class="t " style="left:72px;top:113px">ANALYZER</div>
<div class="t " style="left:24px;top:129px">Delay</div>
<div class="t " style="left:112px;top:129px">0.0000 s</div>
<div class="t b" style="left:24px;top:161px">INPUT DISP</div>
<div class="t " style="left:112px;top:161px">RMS</div>
<div class="t " style="left:24px;top:177px">Unit Ch1</div>
<div class="t " style="left:112px;top:177px">V</div>
<div class="t " style="left:24px;top:193px">Unit Ch2</div>
<div class="t " style="left:112px;top:193px">V</div>
<div class="t " style="left:24px;top:209px">Reference</div>
<div class="t " style="left:112px;top:209px">GEN TRACK</div>
<div class="t b" style="left:24px;top:241px">FREQ/PHASE</div>
<div class="t " style="left:112px;top:241px">OFF</div>
<div class="t b" style="left:24px;top:273px">FUNCTION</div>
<div class="t " style="left:112px;top:273px">THD</div>
<div class="t " style="left:24px;top:289px">Meas Mode</div>
<div class="t " style="left:112px;top:289px">All di</div>
<div class="t " style="left:24px;top:305px">Dyn Mode</div>
<div class="t " style="left:112px;top:305px">PRECISION</div>
<div class="t " style="left:24px;top:321px">Unit</div>
<div class="t " style="left:112px;top:321px"></div>
<div class="t " style="left:24px;top:337px">Fundamentl</div>
<div class="t " style="left:112px;top:337px">AUTO</div>
<div class="t " style="left:24px;top:353px">Fnct Settl</div>
<div class="t " style="left:112px;top:353px">AVERAGE</div>
<div class="t " style="left:24px;top:369px">Samples</div>
<div class="t " style="left:112px;top:369px">3</div>
<div class="t " style="left:24px;top:385px">Timeout</div>
<div class="t" style="left:112px;top:384px;color:#fff">5.0000</div>
<div class="t" style="left:112px;top:384px;color:#000;clip-path:inset(7px 0 1px 0);width:8px;overflow:hidden">5</div>
<div class="t " style="left:168px;top:385px">s</div>
<div class="t n" style="left:296px;top:113px">o(A)</div>
<div class="t n" style="left:424px;top:113px">o(X)</div>
<div class="t n" style="left:568px;top:113px">o(B)</div>
<div class="t g" style="left:272px;top:133px">−113.04 dB</div>
<div class="t g n" style="left:400px;top:133px">2.00002 kHz</div>
<div class="t y" style="left:520px;top:133px">−129.41 dB</div>
<div class="t " style="left:224px;top:154px">dB</div>
<div class="t " style="left:288px;top:154px">THD</div>
<div class="t " style="left:336px;top:154px">CH1,</div>
<div class="t y" style="left:392px;top:154px">THD</div>
<div class="t y" style="left:440px;top:154px">CH2</div>
<div class="t n" style="left:472px;top:154px">vs</div>
<div class="t " style="left:512px;top:154px">FREQUENCY/Hz</div>
<div class="t " style="left:256px;top:167px">0</div>
<div class="t " style="left:240px;top:215px">−30</div>
<div class="t " style="left:240px;top:247px">−50</div>
<div class="t " style="left:240px;top:295px">−80</div>
<div class="t " style="left:232px;top:327px">−100</div>
<div class="t " style="left:232px;top:359px">−120</div>
<div class="t " style="left:232px;top:391px">−140</div>
<div class="t " style="left:296px;top:405px">f1</div>
<div class="t " style="left:336px;top:405px">d2</div>
<div class="t " style="left:368px;top:405px">d3</div>
<div class="t " style="left:408px;top:405px">d4</div>
<div class="t " style="left:440px;top:405px">d5</div>
<div class="t " style="left:480px;top:405px">d6</div>
<div class="t " style="left:512px;top:405px">d7</div>
<div class="t " style="left:552px;top:405px">d8</div>
<div class="t " style="left:584px;top:405px">d9</div>
</div>
<div class="wm">© KenRockwell.com</div>
</body></html>
